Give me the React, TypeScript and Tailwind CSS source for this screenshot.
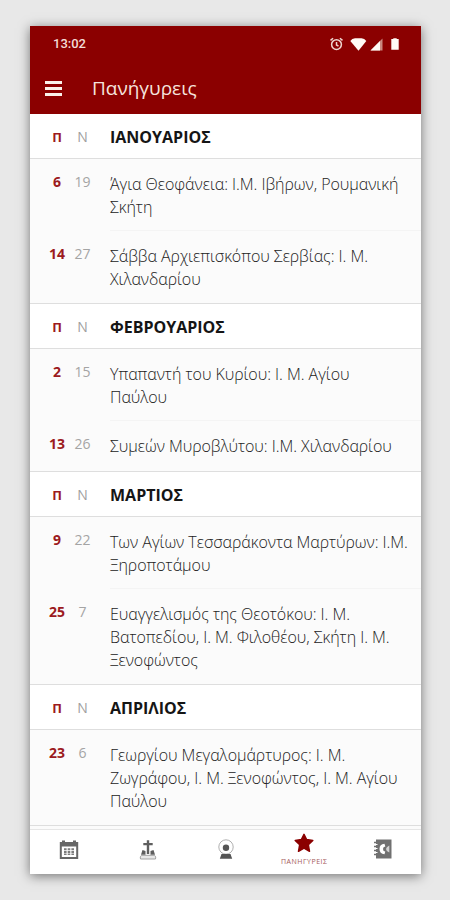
import React from 'react';

type Feast = { oldDay: number; newDay: number; lines: string[]; height: string };
type Month = { name: string; height: string; feasts: Feast[] };

const months: Month[] = [
  {
    name: 'ΙΑΝΟΥΑΡΙΟΣ',
    height: 'h-[45px]',
    feasts: [
      { oldDay: 6, newDay: 19, height: 'h-[72px]', lines: ['Άγια Θεοφάνεια: Ι.Μ. Ιβήρων, Ρουμανική', 'Σκήτη'] },
      { oldDay: 14, newDay: 27, height: 'h-[73px]', lines: ['Σάββα Αρχιεπισκόπου Σερβίας: Ι. Μ.', 'Χιλανδαρίου'] },
    ],
  },
  {
    name: 'ΦΕΒΡΟΥΑΡΙΟΣ',
    height: 'h-[45px]',
    feasts: [
      { oldDay: 2, newDay: 15, height: 'h-[72px]', lines: ['Υπαπαντή του Κυρίου: Ι. Μ. Αγίου', 'Παύλου'] },
      { oldDay: 13, newDay: 26, height: 'h-[51px]', lines: ['Συμεών Μυροβλύτου: Ι.Μ. Χιλανδαρίου'] },
    ],
  },
  {
    name: 'ΜΑΡΤΙΟΣ',
    height: 'h-[45px]',
    feasts: [
      { oldDay: 9, newDay: 22, height: 'h-[72px]', lines: ['Των Αγίων Τεσσαράκοντα Μαρτύρων: Ι.Μ.', 'Ξηροποτάμου'] },
      { oldDay: 25, newDay: 7, height: 'h-[96px]', lines: ['Ευαγγελισμός της Θεοτόκου: Ι. Μ.', 'Βατοπεδίου, Ι. Μ. Φιλοθέου, Σκήτη Ι. Μ.', 'Ξενοφώντος'] },
    ],
  },
  {
    name: 'ΑΠΡΙΛΙΟΣ',
    height: 'h-[45px]',
    feasts: [
      { oldDay: 23, newDay: 6, height: 'h-[96px]', lines: ['Γεωργίου Μεγαλομάρτυρος: Ι. Μ.', 'Ζωγράφου, Ι. Μ. Ξενοφώντος, Ι. Μ. Αγίου', 'Παύλου'] },
    ],
  },
];

function StatusBar() {
  return (
    <div className="flex h-[36px] items-center pl-[23px] pr-[22px] font-['Roboto',sans-serif] text-[13px] font-medium text-[#f3dcd6]">
      <span className="flex-1">13:02</span>
      <svg className="mr-[6px]" width="14" height="14" viewBox="0 0 14 14" fill="none" stroke="#efd5cf" strokeWidth="1.500">
        <circle cx="7.500" cy="7.600" r="4.900" />
        <path d="M7.500 5v3l2 1.200M1.500 3.400 4.100 1.200M13.500 3.400 10.900 1.200" />
      </svg>
      <svg className="mr-[3px]" width="18" height="13" viewBox="0 0 18 13" fill="#fffaf5">
        <path d="M1.300 3Q3 .3 6 .3h6.500q3 0 4.800 2.700L9.500 12.800z" />
      </svg>
      <svg className="mr-[8px]" width="13" height="13" viewBox="0 0 13 13">
        <path d="M12.500.5v12H.5z" fill="#c98880" />
        <path d="M10 3v9.500H.5z" fill="#fffaf5" />
      </svg>
      <svg width="8" height="12" viewBox="0 0 8 12" fill="#fffaf5">
        <path d="M.3 1h2V.3h3.400V1h2v10.700H.3z" />
      </svg>
    </div>
  );
}

function AppBar() {
  return (
    <div className="flex h-[52px] items-center pl-[15px]">
      <div className="flex w-[17px] flex-col gap-[3px]">
        <i className="h-[3px] bg-[#fbf1ea]" />
        <i className="h-[3px] bg-[#fbf1ea]" />
        <i className="h-[3px] bg-[#fbf1ea]" />
      </div>
      <h1 className="ml-[30px] text-[19px] leading-[26px] text-[#f6e4dd]">Πανήγυρεις</h1>
    </div>
  );
}

function MonthHeader({ month }: { month: Month }) {
  return (
    <div className={`flex shrink-0 items-center border-b border-[#dedede] bg-white pt-[2px] ${month.height}`}>
      <span className="w-[54px] pt-px text-center text-[13px] font-bold text-[#9c1a20]">Π</span>
      <span className="-ml-[14px] w-[25px] text-center text-[14px] leading-[20px] text-[#a0a0a0]">Ν</span>
      <h2 className="ml-[15px] text-[16px] font-bold text-[#151515]">{month.name}</h2>
    </div>
  );
}

function FeastRow({ feast, last }: { feast: Feast; last: boolean }) {
  return (
    <div className={`flex shrink-0 ${feast.height} ${last ? 'border-b border-[#dedede]' : ''}`}>
      <span className="w-[54px] pt-[12px] text-center text-[14px] leading-[22px] font-bold text-[#9c1a20]">{feast.oldDay}</span>
      <span className="-ml-[14px] w-[25px] pt-[12px] text-center text-[14px] leading-[22px] text-[#a4a4a4]">{feast.newDay}</span>
      <div className={`ml-[15px] flex-1 pt-[14px] text-[16px] leading-[23px] font-light tracking-[-0.045px] text-[#222] ${last ? '' : 'border-b border-[#f4f4f4]'}`}>
        {feast.lines.map((line) => (
          <p key={line} className="whitespace-nowrap">{line}</p>
        ))}
      </div>
    </div>
  );
}

function BottomNav() {
  return (
    <nav className="grid h-[45px] shrink-0 grid-cols-5 border-t border-[#e6e6e6] bg-white">
      <div className="flex justify-center pt-[10px]">
        <svg width="20" height="20" viewBox="0 0 20 20" fill="#666">
          <path fillRule="evenodd" d="M.8 2H3V.5h3V2h8V.5h3V2h2.200v17H.8zM2.800 6.500v10.500h14.400V6.500z" />
          <path d="M5 8.300h2.600v2H5zM8.700 8.300h2.600v2H8.700zM12.400 8.300H15v2h-2.600zM5 10.900h2.600v2H5zM8.700 10.900h2.600v2H8.700zM12.400 10.900H15v2h-2.600zM5 13.500h2.600v1.500H5zM8.700 13.500h2.600v1.500H8.700zM12.400 13.500H15v1.500h-2.600z" fill="#7c7c7c" />
        </svg>
      </div>
      <div className="flex justify-center pt-[10px] pl-px">
        <svg width="18" height="20" viewBox="0 0 18 20" fill="#5e5e5e">
          <path d="M7.800.3h2.400V3h3.500v2.300h-3.500V14H7.800V5.300H4.300V3h3.500z" />
          <path d="M2 14.700 3.500 10 6.500 11v3.700zM16 14.700 14.500 10l-3 1v3.700z" />
          <path d="M2.500 15.300h13q2 1.500 1 3.700h-15q-1-2.200 1-3.700z" fill="#e8e8e8" stroke="#9a9a9a" strokeWidth=".9" />
        </svg>
      </div>
      <div className="flex justify-center pt-[9px] pl-px">
        <svg width="18" height="21" viewBox="0 0 18 21">
          <circle cx="9" cy="8" r="7.200" fill="#fff" stroke="#b0b0b0" strokeWidth="1" />
          <circle cx="9" cy="8.800" r="3.200" fill="#555" />
          <path d="M2.800 19.800 4.500 15h9l1.700 4.800z" fill="#555" />
        </svg>
      </div>
      <div className="flex flex-col items-center pt-[3px] pl-px">
        <svg width="20" height="20" viewBox="0 0 20 20" fill="#8b0000" stroke="#8b0000" strokeWidth="1.500" strokeLinejoin="round">
          <path d="m10 1.300 2.600 5.200 6.200.9-4.500 4.300 1.200 6.600L10 15.200l-5.500 3.100 1.200-6.600-4.500-4.300 6.200-.9z" />
        </svg>
        <span className="mt-[4px] text-[7px] leading-[10px] tracking-[0.5px] text-[#a55b5b]">ΠΑΝΗΓΥΡΕΙΣ</span>
      </div>
      <div className="flex justify-center pt-[9px] pl-[2px]">
        <svg width="18" height="20" viewBox="0 0 18 20">
          <path d="M2 .5h15.500v19H2z" fill="#707070" />
          <path d="M0 3.500h3M0 7.500h3M0 11.500h3M0 15.500h3" stroke="#707070" strokeWidth="1.600" />
          <path d="M1 5.500h2.500M1 9.500h2.500M1 13.500h2.500" stroke="#fff" strokeWidth="1" />
          <path d="M10.500 4.800Q5.500 5 5.500 10t5 5.200l.8-2.700Q9 12.500 9 10t2.300-2.500z" fill="#fff" />
          <path d="M15.300 6.500Q12 8 12 10t3.300 3.500z" fill="#d2d2d2" />
        </svg>
      </div>
    </nav>
  );
}

export default function App() {
  return (
    <div className="flex h-[900px] w-[450px] flex-col bg-[#e8e8e8] pt-[26px] pl-[30px] font-['Open_Sans','Noto_Sans',sans-serif]">
      <main className="flex h-[848px] w-[391px] flex-col bg-[#fbfbfb] shadow-[0_2px_11px_rgba(0,0,0,0.5)]">
        <header className="h-[88px] shrink-0 bg-[#8b0000]">
          <StatusBar />
          <AppBar />
        </header>
        <section className="flex min-h-0 flex-1 flex-col overflow-hidden">
          {months.map((month) => (
            <React.Fragment key={month.name}>
              <MonthHeader month={month} />
              {month.feasts.map((feast, i) => (
                <FeastRow key={feast.oldDay} feast={feast} last={i === month.feasts.length - 1} />
              ))}
            </React.Fragment>
          ))}
        </section>
        <BottomNav />
      </main>
    </div>
  );
}
